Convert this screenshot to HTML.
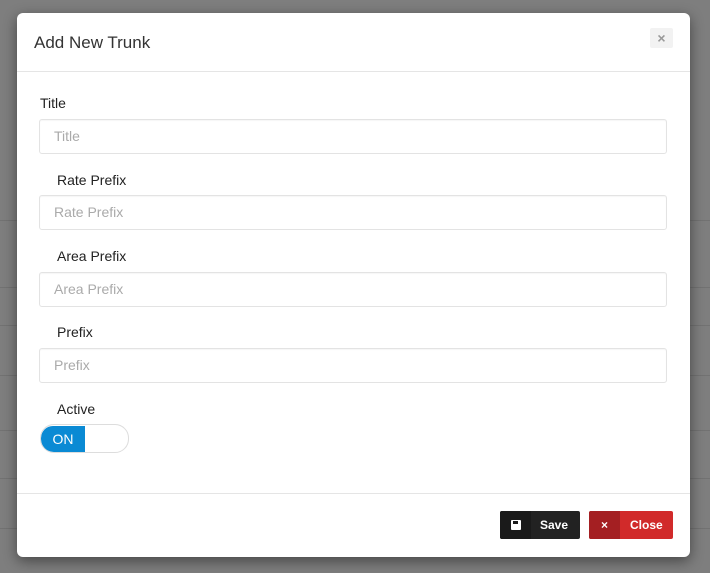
<!DOCTYPE html>
<html><head><style>
body{margin:0;width:710px;height:573px;background:#7e7e7e;position:relative;overflow:hidden;font-family:"Liberation Sans",sans-serif;}
.bgl{position:absolute;left:0;width:710px;height:1px;background:#727272}
.modal{position:absolute;left:17px;top:13px;width:673px;height:544px;background:#fff;border-radius:6px;box-shadow:0 4px 14px rgba(0,0,0,.45)}
.hd{position:absolute;left:0;top:0;width:673px;height:58px;border-bottom:1px solid #e5e5e5}
.hd h4{margin:0;position:absolute;left:17px;top:20px;font-size:17px;font-weight:normal;color:#333}
.x{position:absolute;left:633px;top:15px;width:23px;height:20px;background:#f2f2f2;border-radius:2px;color:#999;font-size:14px;text-align:center;line-height:20px;font-weight:bold}
.lab{position:absolute;font-size:14px;color:#222}
.inp{position:absolute;left:22px;width:628px;height:35px;border:1px solid #e3e3e3;border-radius:3px;box-sizing:border-box;color:#aaa;font-size:14px;line-height:33px;padding-left:14px;box-shadow:inset 0 1px 1px rgba(0,0,0,.04)}
.tog{position:absolute;left:23px;top:411px;width:89px;height:29px;border:1px solid #ddd;border-radius:14px;box-sizing:border-box;overflow:hidden}
.tog div{position:absolute;left:0;top:1px;width:44px;height:26px;background:#0a8ad4;color:#fff;font-size:14px;line-height:26px;text-align:center;border-radius:12px 0 0 12px}
.ft{position:absolute;left:0;top:480px;width:673px;height:1px;background:#e5e5e5}
.btn{position:absolute;top:498px;height:28px;border-radius:2px;color:#fff;font-size:12px;font-weight:bold;line-height:28px;overflow:hidden}
.btn span{position:absolute;left:0;top:0;width:31px;height:28px;text-align:center}
</style></head><body>
<div class="bgl" style="top:220px"></div><div class="bgl" style="top:287px"></div><div class="bgl" style="top:325px"></div><div class="bgl" style="top:375px"></div><div class="bgl" style="top:430px"></div><div class="bgl" style="top:478px"></div><div class="bgl" style="top:528px"></div>
<div class="modal">
<div class="hd"><h4>Add New Trunk</h4><div class="x">×</div></div>
<div class="lab" style="left:23px;top:82px">Title</div>
<div class="inp" style="top:106px">Title</div>
<div class="lab" style="left:40px;top:159px">Rate Prefix</div>
<div class="inp" style="top:182px">Rate Prefix</div>
<div class="lab" style="left:40px;top:235px">Area Prefix</div>
<div class="inp" style="top:259px">Area Prefix</div>
<div class="lab" style="left:40px;top:311px">Prefix</div>
<div class="inp" style="top:335px">Prefix</div>
<div class="lab" style="left:40px;top:388px">Active</div>
<div class="tog"><div>ON</div></div>
<div class="ft"></div>
<div class="btn" style="left:483px;width:80px;background:#222"><span style="background:#1a1a1a"><svg width="10" height="10" viewBox="0 0 10 10" style="vertical-align:-1px"><rect x="0" y="0" width="10" height="10" rx="1" fill="#fff"/><rect x="2" y="1" width="5" height="3" fill="#1a1a1a"/></svg></span><b style="position:absolute;left:40px">Save</b></div>
<div class="btn" style="left:572px;width:84px;background:#d12a2a"><span style="background:#a41f22">×</span><b style="position:absolute;left:41px">Close</b></div>
</div>
</body></html>
